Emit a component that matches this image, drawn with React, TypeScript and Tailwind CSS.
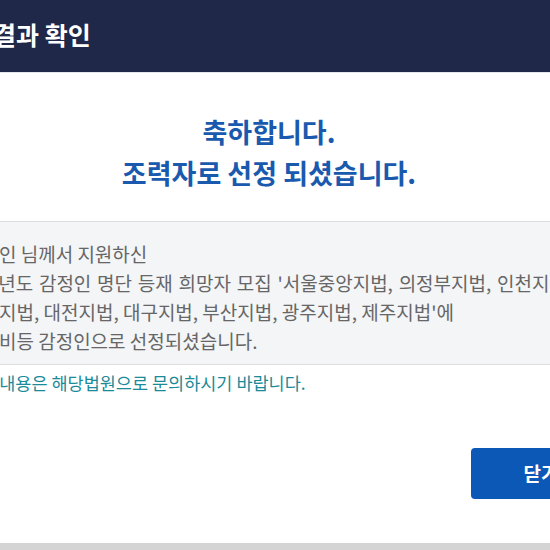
import React from "react";

const font = { fontFamily: '"Noto Sans CJK KR", "Noto Sans", sans-serif' };

export default function App() {
  return (
    <div className="w-[550px] h-[550px] overflow-hidden bg-[#d4d4d4]" style={font}>
      <div className="ml-[-110px] w-[758px] h-[543px] bg-white flex flex-col">
        <div className="h-[73px] shrink-0 bg-[#1f2849] border-b border-[#e3e6ec] flex items-center pl-[57px] pb-[4px]">
          <h1 className="text-white text-[25px] font-bold leading-none whitespace-nowrap">선정결과 확인</h1>
        </div>
        <div className="pt-[38px] flex flex-col items-center text-[#1a5aae] text-[27px] font-bold leading-[41px]">
          <p>축하합니다.</p>
          <p>조력자로 선정 되셨습니다.</p>
        </div>
        <div className="mt-[28px] bg-[#f4f5f7] border-y border-[#dcdee2] pl-[74px] pt-[17px] pb-[9px] text-[19px] leading-[29px] text-[#666666] whitespace-nowrap">
          <p>김정인 님께서 지원하신</p>
          <p className="[word-spacing:1.5px]">
            <span className="tracking-[-2px]">2024</span>년도 감정인 명단 등재 희망자 모집 '서울중앙지법, 의정부지법, 인천지법, 수원지법, 춘천지법,
          </p>
          <p>청주지법, 대전지법, 대구지법, 부산지법, 광주지법, 제주지법'에</p>
          <p>정예비등 감정인으로 선정되셨습니다.</p>
        </div>
        <p className="mt-[6px] pl-[57px] text-[17.5px] leading-[24px] text-[#1b8a99] whitespace-nowrap">자세한 내용은 해당법원으로 문의하시기 바랍니다.</p>
        <div className="mt-[53px] flex justify-end pr-[37px]">
          <button className="w-[140px] h-[51px] rounded-[4px] bg-[#0b58b7] text-white text-[19px] font-bold">닫기</button>
        </div>
      </div>
    </div>
  );
}
